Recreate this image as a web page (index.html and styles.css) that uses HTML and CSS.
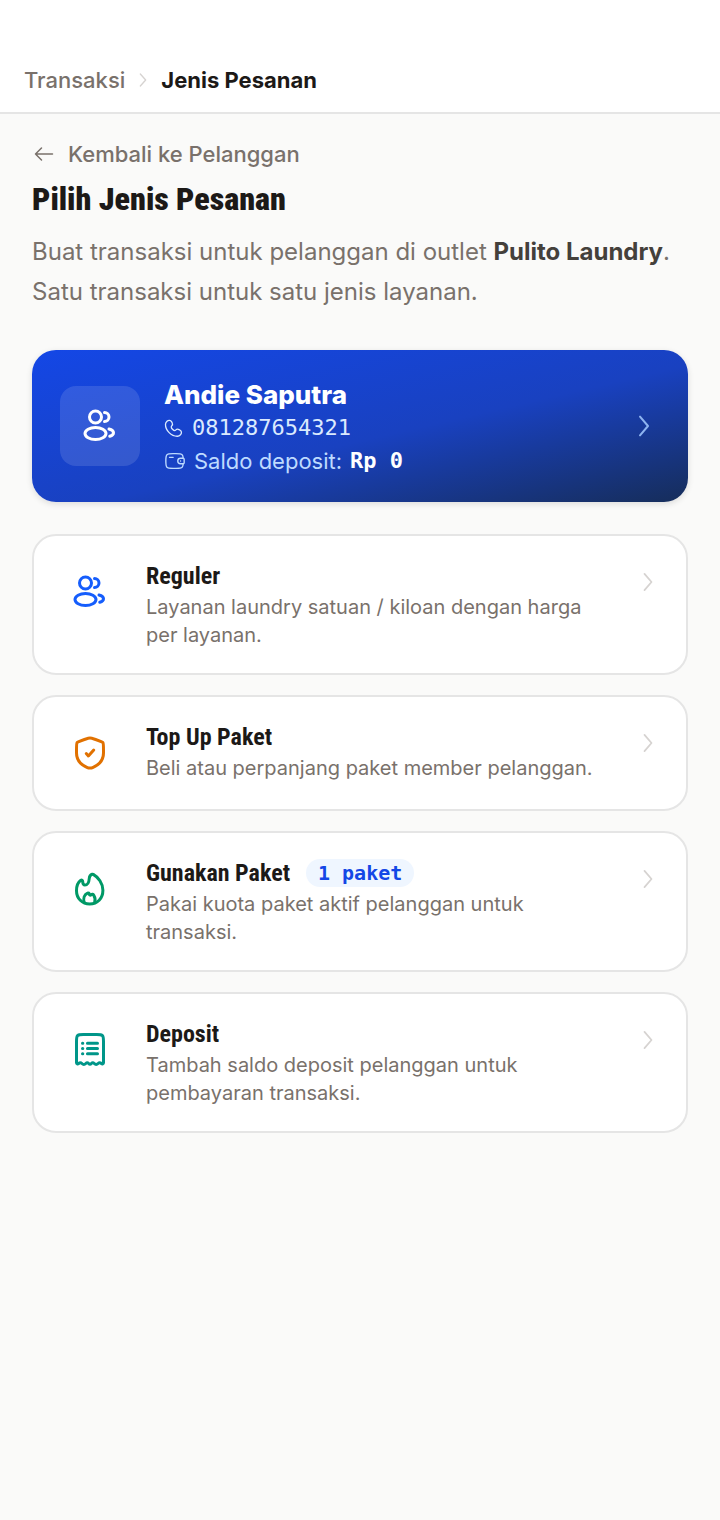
FILE: index.html
```html
<!DOCTYPE html>
<html lang="id">

<head>
  <meta charset="UTF-8">
  <meta name="viewport" content="width=device-width, initial-scale=1.0">
  <link rel="stylesheet" href="styles.css">
  <title>Jenis Pesanan</title>
</head>

<body>

  <header class="topbar">
    <nav class="breadcrumb" aria-label="Breadcrumb">
      <a href="#transaksi">Transaksi</a>
      <svg class="breadcrumb-sep" viewBox="0 0 24 24"><path d="M8 3l8 9-8 9"/></svg>
      <span class="breadcrumb-current">Jenis Pesanan</span>
    </nav>
  </header>

  <main class="content">
    <a class="back-link" href="#pelanggan">
      <svg viewBox="0 0 24 24"><path d="M20.500 12H3.500M9.500 6L3.500 12l6 6"/></svg>
      Kembali ke Pelanggan
    </a>

    <h1>Pilih Jenis Pesanan</h1>
    <p class="intro">Buat transaksi untuk pelanggan di outlet <strong>Pulito Laundry</strong>. Satu transaksi untuk satu jenis layanan.</p>

    <a class="customer" href="#andie-saputra">
      <span class="avatar">
        <svg viewBox="0 0 24 24">
          <circle cx="9" cy="6" r="4"/>
          <path d="M15 9a3 3 0 1 0 0-6"/>
          <ellipse cx="9" cy="17" rx="7" ry="4"/>
          <path d="M18 14c1.754.385 3 1.359 3 2.500c0 1.030-1.014 1.923-2.500 2.370"/>
        </svg>
      </span>
      <span class="customer-info">
        <span class="customer-name">Andie Saputra</span>
        <span class="customer-phone">
          <svg viewBox="2 2 20 20"><path d="M9.500 5.600l.65 1.160c.58 1.050.35 2.430-.57 3.350 0 0-1.120 1.120.91 3.140s3.140.91 3.140.91c.92-.92 2.300-1.150 3.350-.57l1.160.65c1.580.88 1.770 3.100.38 4.490-.84.84-1.860 1.490-3 1.530-1.900.07-5.140-.41-8.380-3.650S3.420 10.130 3.490 8.230c.04-1.130.69-2.160 1.530-3 1.390-1.390 3.600-1.200 4.480.37z"/></svg>
          081287654321
        </span>
        <span class="customer-deposit">
          <svg viewBox="0 0 24 24">
            <path d="M6 8h4M20.800 9H18.200C16.400 9 15 10.300 15 12s1.400 3 3.200 3h2.600c.9-.1 1.200-.6 1.200-1.200v-3.600c0-.6-.3-1.100-1.200-1.200z"/>
            <path d="M20.900 9c-.1-1.900-.3-3.100-1.100-3.800C18.700 4 16.800 4 13 4h-3C6.200 4 4.300 4 3.200 5.200 2 6.300 2 8.200 2 12s0 5.700 1.200 6.800C4.300 20 6.200 20 10 20h3c3.800 0 5.700 0 6.800-1.200.8-.7 1-1.900 1.100-3.800M18 12h.1"/>
          </svg>
          Saldo deposit: <strong>Rp 0</strong>
        </span>
      </span>
      <svg class="customer-arrow" viewBox="0 0 24 24"><path d="M9 5l6 7-6 7"/></svg>
    </a>

    <div class="order-list">
      <a class="order" href="#reguler">
        <span class="order-icon blue">
          <svg viewBox="0 0 24 24">
            <circle cx="9" cy="6" r="4"/>
            <path d="M15 9a3 3 0 1 0 0-6"/>
            <ellipse cx="9" cy="17" rx="7" ry="4"/>
            <path d="M18 14c1.754.385 3 1.359 3 2.500c0 1.030-1.014 1.923-2.500 2.370"/>
          </svg>
        </span>
        <span class="order-text">
          <span class="order-title">Reguler</span>
          <span class="order-desc">Layanan laundry satuan / kiloan dengan harga per layanan.</span>
        </span>
        <svg class="order-arrow" viewBox="0 0 24 24"><path d="M9 5l6 7-6 7"/></svg>
      </a>

      <a class="order" href="#top-up">
        <span class="order-icon orange">
          <svg viewBox="0 0 24 24">
            <path d="M3 10.417c0-3.198 0-4.797.378-5.335c.377-.537 1.880-1.052 4.887-2.081l.573-.196C10.405 2.268 11.188 2 12 2s1.595.268 3.162.805l.573.196c3.007 1.029 4.510 1.544 4.887 2.081C21 5.620 21 7.220 21 10.417v1.574c0 5.638-4.239 8.375-6.899 9.536C13.380 21.842 13.020 22 12 22s-1.380-.158-2.101-.473C7.239 20.365 3 17.630 3 11.991z"/>
            <path d="M9.500 12.400l1.429 1.600l3.571-4"/>
          </svg>
        </span>
        <span class="order-text">
          <span class="order-title">Top Up Paket</span>
          <span class="order-desc">Beli atau perpanjang paket member pelanggan.</span>
        </span>
        <svg class="order-arrow" viewBox="0 0 24 24"><path d="M9 5l6 7-6 7"/></svg>
      </a>

      <a class="order" href="#gunakan-paket">
        <span class="order-icon green">
          <svg viewBox="0 0 24 24">
            <path d="M11.800 22c-5 0-8.800-3.700-8.800-8.900 0-3.200 1.200-5.700 2.900-6.900.6-.4 1.200 0 1.200.7.1 1.400.6 2.500 1.500 2.500 2 0 2.700-1.800 2.900-4.400.1-1.300.9-2.500 1.900-2.800.4-.1.800 0 1 .2 3 1.700 6.200 5.700 6.200 10.400 0 5.600-3.700 9.200-8.800 9.200z"/>
            <path d="M8.200 21c-.9-2.700 0-5.300 2.200-6.300.6-.3 1 .1 1.100.6.100.8.800 1 1.300.5.600-.5 1.300-.3 1.700.4.900 1.500 1.100 3.200.6 4.800"/>
          </svg>
        </span>
        <span class="order-text">
          <span class="order-title">Gunakan Paket <span class="badge">1 paket</span></span>
          <span class="order-desc">Pakai kuota paket aktif pelanggan untuk transaksi.</span>
        </span>
        <svg class="order-arrow" viewBox="0 0 24 24"><path d="M9 5l6 7-6 7"/></svg>
      </a>

      <a class="order" href="#deposit">
        <span class="order-icon teal">
          <svg viewBox="0 0 24 24">
            <path d="M3 20.500V6.500c0-2.400 0-3.400.7-4.100S5.400 1.700 7.500 1.700h9c2.100 0 3.100 0 3.800.7s.7 1.700.7 4.100v14c0 .7-.8 1-1.400.5-.8-.7-1.500-.7-2.200 0-.9.9-1.700.9-2.600 0-.7-.7-1.200-.7-1.900 0-.6.7-1.200.7-1.800 0-.7-.7-1.200-.7-1.900 0-.9.9-1.700.9-2.600 0-.7-.7-1.400-.7-2.200 0-.6.500-1.400.2-1.400-.5z"/>
            <path d="M10.300 7.500H17M10.300 11H17M10.300 14.500H17M7 7.500h.2M7 11h.2M7 14.500h.2"/>
          </svg>
        </span>
        <span class="order-text">
          <span class="order-title">Deposit</span>
          <span class="order-desc">Tambah saldo deposit pelanggan untuk pembayaran transaksi.</span>
        </span>
        <svg class="order-arrow" viewBox="0 0 24 24"><path d="M9 5l6 7-6 7"/></svg>
      </a>
    </div>
  </main>

</body>

</html>
```

FILE: styles.css
```css
* {
  box-sizing: border-box;
}

body {
  margin: 0;
  background-color: #fafaf9;
  color: #1c1917;
  font-family: Inter, "Liberation Sans", sans-serif;
}

a {
  color: inherit;
  text-decoration: none;
}

svg {
  display: block;
  flex-shrink: 0;
  fill: none;
  stroke: currentColor;
  stroke-width: 2;
  stroke-linecap: round;
  stroke-linejoin: round;
}

/* top bar */
.topbar {
  padding: 48px 24px 0;
  background-color: #ffffff;
  border-bottom: 2px solid #e5e5e5;
}

.breadcrumb {
  display: flex;
  align-items: center;
  gap: 10px;
  height: 64px;
  color: #79716b;
  font-size: 22px;
  font-weight: 500;
}

.breadcrumb-sep {
  width: 16px;
  height: 16px;
  color: #d6d3d1;
}

.breadcrumb-current {
  color: #1c1917;
  font-weight: 700;
}

/* page heading */
.content {
  padding: 24px 32px;
}

.back-link {
  display: flex;
  align-items: center;
  gap: 12px;
  width: fit-content;
  color: #79716b;
  font-size: 22px;
  font-weight: 500;
  line-height: 32px;
}

.back-link svg {
  width: 24px;
  height: 24px;
  stroke-width: 1.5;
}

h1 {
  margin: 9px 0 13px;
  font-family: "Roboto Condensed", "Liberation Sans Narrow", Roboto, sans-serif;
  font-size: 32px;
  font-weight: 900;
  line-height: 40px;
}

.intro {
  margin: 0 0 38px;
  color: #79716b;
  font-size: 24px;
  line-height: 40px;
}

.intro strong {
  color: #44403b;
  font-weight: 700;
}

/* selected customer */
.customer {
  display: flex;
  align-items: center;
  gap: 24px;
  margin-bottom: 32px;
  padding: 24px 28px;
  border-radius: 24px;
  background: linear-gradient(to bottom right, #1447e6, #1941c0 55%, #162d5a);
  box-shadow: 0 2px 6px rgba(0, 0, 0, 0.12);
  color: #ffffff;
}

.avatar {
  display: flex;
  align-items: center;
  justify-content: center;
  width: 80px;
  height: 80px;
  border-radius: 16px;
  background-color: rgba(255, 255, 255, 0.12);
}

.avatar svg {
  width: 36px;
  height: 36px;
}

.customer-info {
  flex: 1;
  padding-top: 4px;
}

.customer-name {
  display: block;
  font-size: 26px;
  font-weight: 800;
  line-height: 34px;
}

.customer-phone,
.customer-deposit {
  display: flex;
  align-items: center;
  gap: 8px;
  color: #bedbff;
  font-size: 22px;
  line-height: 34px;
}

.customer-phone {
  color: #dbeafe;
  font-family: "DejaVu Sans Mono", monospace;
  line-height: 32px;
}

.customer-phone svg {
  width: 20px;
  height: 20px;
  stroke-width: 1.3;
}

.customer-deposit svg {
  width: 22px;
  height: 22px;
  stroke-width: 1.5;
}

.customer-deposit strong {
  color: #ffffff;
  font-family: "DejaVu Sans Mono", monospace;
  font-weight: 700;
}

.customer-arrow {
  width: 32px;
  height: 32px;
  color: #8eb4f0;
  stroke-width: 1.5;
}

/* order types */
.order-list {
  display: grid;
  gap: 20px;
}

.order {
  display: flex;
  align-items: flex-start;
  gap: 24px;
  padding: 24px;
  border: 2px solid #e5e5e5;
  border-radius: 24px;
  background-color: #ffffff;
}

.order-icon {
  display: flex;
  align-items: center;
  justify-content: center;
  width: 64px;
  height: 64px;
}

.order-icon svg {
  width: 36px;
  height: 36px;
}

.blue {
  color: #155dfc;
}

.orange {
  color: #e17100;
}

.green {
  color: #009966;
}

.teal {
  color: #009689;
}

.order-text {
  flex: 1;
}

.order-title {
  display: flex;
  align-items: center;
  gap: 16px;
  margin-bottom: 1px;
  font-family: "Roboto Condensed", "Liberation Sans Narrow", Roboto, sans-serif;
  font-size: 24px;
  font-weight: 700;
  line-height: 32px;
}

.order-desc {
  display: block;
  color: #79716b;
  font-size: 20px;
  line-height: 28px;
}

.badge {
  padding: 0 12px;
  border-radius: 14px;
  background-color: #eff6ff;
  color: #1447e6;
  font-family: "DejaVu Sans Mono", monospace;
  font-size: 20px;
  line-height: 28px;
}

.order-arrow {
  width: 28px;
  height: 28px;
  margin-top: 8px;
  color: #d6d3d1;
  stroke-width: 1.5;
}
```
